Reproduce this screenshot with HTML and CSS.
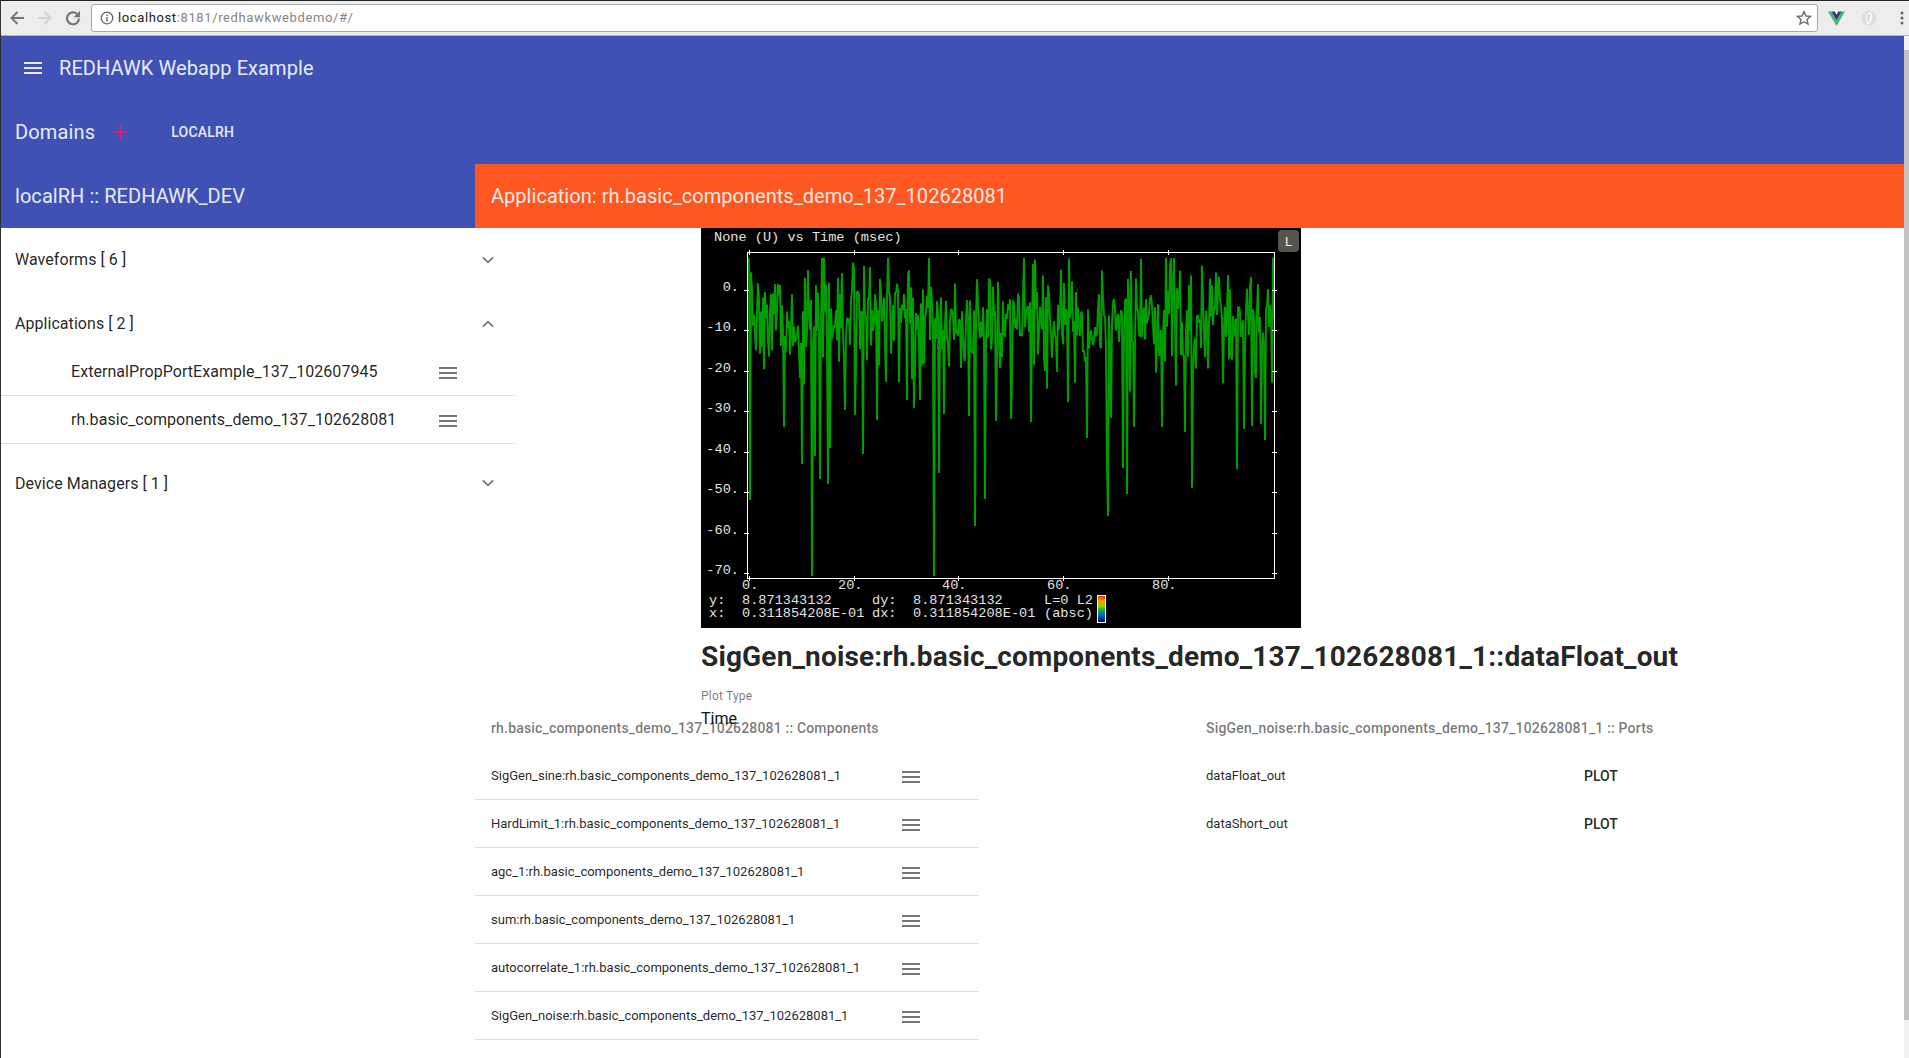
FILE: index.html
```html
<!DOCTYPE html>
<html lang="en">
<head>
<meta charset="utf-8">
<title>REDHAWK Webapp Example</title>
<link rel="stylesheet" href="styles.css">
</head>
<body>
<div class="window">
  <div class="chrome">
    <div class="nav">
      <svg class="nav-icon" viewBox="0 0 16 16"><path d="M15 8H2.500M8.500 2 2.500 8l6 6" fill="none" stroke="#777" stroke-width="2"/></svg>
      <svg class="nav-icon" viewBox="0 0 16 16"><path d="M1 8h12.500M7.500 2l6 6-6 6" fill="none" stroke="#d4d4d4" stroke-width="2"/></svg>
      <svg class="nav-icon" viewBox="0 0 16 16"><path d="M14 8.500a6 6 0 1 1-1.800-4.500" fill="none" stroke="#777" stroke-width="2.200"/><path d="M15 .8v6.400H8.600z" fill="#777"/></svg>
    </div>
    <div class="omnibox">
      <svg class="info" viewBox="0 0 14 14"><circle cx="7" cy="7" r="5.800" fill="none" stroke="#666" stroke-width="1.300"/><path d="M7 6v4.500M7 3.400v1.500" stroke="#666" stroke-width="1.400"/></svg>
      <span class="url"><span class="host">localhost</span>:8181/redhawkwebdemo/#/</span>
      <svg class="star" viewBox="0 0 16 16"><path d="M8 1.600 9.900 6l4.700.4-3.600 3.100 1.100 4.600L8 11.700l-4.100 2.400L5 9.500 1.400 6.400 6.100 6z" fill="none" stroke="#6e6e6e" stroke-width="1.400"/></svg>
    </div>
    <div class="extensions">
      <svg class="ext" viewBox="0 0 17 15"><path d="M0 .5h3.400L8.500 9.300 13.600.5H17L8.500 15z" fill="#41b883"/><path d="M3.400 .5h3.200l1.900 3.200L10.400.5h3.200L8.500 9.300z" fill="#2f3f6b"/></svg>
      <svg class="ext ext-grey" viewBox="0 0 16 16"><circle cx="8" cy="8" r="7.600" fill="#dcdcdc"/><path d="M9.500 1.500C5 3 3.500 9 6 14.500 11.500 13 13.500 6 9.500 1.500z" fill="#f5f5f5"/><path d="M8.500 4.500C7 7 7 10 8 12" fill="none" stroke="#d0d0d0" stroke-width="1.500"/></svg>
      <svg class="menu-dots" viewBox="0 0 4 16"><circle cx="2" cy="3" r="1.500" fill="#666"/><circle cx="2" cy="8" r="1.500" fill="#666"/><circle cx="2" cy="13" r="1.500" fill="#666"/></svg>
    </div>
  </div>

  <div class="viewport">
    <div class="page">
      <header class="app-header">
        <div class="toolbar">
          <svg class="burger-white" viewBox="0 0 18 12"><path d="M0 1h18M0 6h18M0 11h18" stroke="#e8eaf6" stroke-width="2"/></svg>
          <span class="app-title">REDHAWK Webapp Example</span>
        </div>
        <div class="domains">
          <span class="domains-label">Domains</span>
          <svg class="plus" viewBox="0 0 15 14"><path d="M7.500 0v14M0 7h15" stroke="#e91e63" stroke-width="1.600"/></svg>
          <span class="tab">LOCALRH</span>
        </div>
        <div class="subheader">
          <div class="domain-name">localRH :: REDHAWK_DEV</div>
          <div class="app-name">Application: rh.basic_components_demo_137_102628081</div>
        </div>
      </header>

      <div class="body-row">
        <aside class="sidebar">
          <div class="group-head group-tight">
            <span>Waveforms [ 6 ]</span>
            <svg class="chev" viewBox="0 0 12 8"><path d="M1 1.300 6 6.300l5-5" fill="none" stroke="#757575" stroke-width="1.800"/></svg>
          </div>
          <div class="group-head group-tight">
            <span>Applications [ 2 ]</span>
            <svg class="chev chev-up" viewBox="0 0 12 8"><path d="M1 6.700 6 1.700l5 5" fill="none" stroke="#757575" stroke-width="1.800"/></svg>
          </div>
          <div class="app-row">
            <span>ExternalPropPortExample_137_102607945</span>
            <svg class="burger" viewBox="0 0 18 12"><path d="M0 1h18M0 6h18M0 11h18" stroke="#757575" stroke-width="2"/></svg>
          </div>
          <div class="app-row">
            <span>rh.basic_components_demo_137_102628081</span>
            <svg class="burger" viewBox="0 0 18 12"><path d="M0 1h18M0 6h18M0 11h18" stroke="#757575" stroke-width="2"/></svg>
          </div>
          <div class="group-head group-devices">
            <span>Device Managers [ 1 ]</span>
            <svg class="chev" viewBox="0 0 12 8"><path d="M1 1.300 6 6.300l5-5" fill="none" stroke="#757575" stroke-width="1.800"/></svg>
          </div>
        </aside>

        <main class="main">
          <section class="plot-section">
            <div class="plot">
              <svg class="plot-svg" viewBox="0 0 600 400" width="600" height="400">
                <polyline id="trace" class="trace" points=""></polyline>
                <polyline id="trace-core" class="trace-core" points=""></polyline>
                <rect class="frame" x="46.500" y="24.500" width="527" height="326"></rect>
                <path id="ticks" class="frame" d=""></path>
                <text class="mono" x="13" y="13">None (U) vs Time (msec)</text>
                <text class="mono" x="38" y="63" text-anchor="end"> 0.</text>
                <text class="mono" x="38" y="103" text-anchor="end">-10.</text>
                <text class="mono" x="38" y="144" text-anchor="end">-20.</text>
                <text class="mono" x="38" y="184" text-anchor="end">-30.</text>
                <text class="mono" x="38" y="225" text-anchor="end">-40.</text>
                <text class="mono" x="38" y="265" text-anchor="end">-50.</text>
                <text class="mono" x="38" y="306" text-anchor="end">-60.</text>
                <text class="mono" x="38" y="346" text-anchor="end">-70.</text>
                <text class="mono" x="41" y="361">0.</text>
                <text class="mono" x="137" y="361">20.</text>
                <text class="mono" x="241" y="361">40.</text>
                <text class="mono" x="346" y="361">60.</text>
                <text class="mono" x="451" y="361">80.</text>
                <text class="mono" x="8" y="376">y:</text>
                <text class="mono" x="41" y="376">8.871343132</text>
                <text class="mono" x="171" y="376">dy:</text>
                <text class="mono" x="212" y="376">8.871343132</text>
                <text class="mono" x="343" y="376">L=0 L2</text>
                <text class="mono" x="8" y="389">x:</text>
                <text class="mono" x="41" y="389">0.311854208E-01</text>
                <text class="mono" x="171" y="389">dx:</text>
                <text class="mono" x="212" y="389">0.311854208E-01</text>
                <text class="mono" x="343" y="389">(absc)</text>
                <defs>
                  <linearGradient id="rainbow" x1="0" y1="0" x2="0" y2="1">
                    <stop offset="0" stop-color="#f02808"></stop>
                    <stop offset=".2" stop-color="#f0a000"></stop>
                    <stop offset=".4" stop-color="#90d000"></stop>
                    <stop offset=".55" stop-color="#00b050"></stop>
                    <stop offset=".75" stop-color="#0060d0"></stop>
                    <stop offset="1" stop-color="#000070"></stop>
                  </linearGradient>
                </defs>
                <rect x="396.500" y="367.500" width="8" height="27" fill="url(#rainbow)" stroke="#fff"></rect>
              </svg>
              <span class="legend-btn">L</span>
            </div>
            <h1 class="plot-title">SigGen_noise:rh.basic_components_demo_137_102628081_1::dataFloat_out</h1>
            <div class="field-label">Plot Type</div>
            <div class="field-value">Time</div>
          </section>

          <section class="lists">
            <div class="components">
              <h2 class="list-head">rh.basic_components_demo_137_102628081 :: Components</h2>
              <div class="comp-row"><span>SigGen_sine:rh.basic_components_demo_137_102628081_1</span><svg class="burger" viewBox="0 0 18 12"><path d="M0 1h18M0 6h18M0 11h18" stroke="#757575" stroke-width="2"/></svg></div>
              <div class="comp-row"><span>HardLimit_1:rh.basic_components_demo_137_102628081_1</span><svg class="burger" viewBox="0 0 18 12"><path d="M0 1h18M0 6h18M0 11h18" stroke="#757575" stroke-width="2"/></svg></div>
              <div class="comp-row"><span>agc_1:rh.basic_components_demo_137_102628081_1</span><svg class="burger" viewBox="0 0 18 12"><path d="M0 1h18M0 6h18M0 11h18" stroke="#757575" stroke-width="2"/></svg></div>
              <div class="comp-row"><span>sum:rh.basic_components_demo_137_102628081_1</span><svg class="burger" viewBox="0 0 18 12"><path d="M0 1h18M0 6h18M0 11h18" stroke="#757575" stroke-width="2"/></svg></div>
              <div class="comp-row"><span>autocorrelate_1:rh.basic_components_demo_137_102628081_1</span><svg class="burger" viewBox="0 0 18 12"><path d="M0 1h18M0 6h18M0 11h18" stroke="#757575" stroke-width="2"/></svg></div>
              <div class="comp-row"><span>SigGen_noise:rh.basic_components_demo_137_102628081_1</span><svg class="burger" viewBox="0 0 18 12"><path d="M0 1h18M0 6h18M0 11h18" stroke="#757575" stroke-width="2"/></svg></div>
            </div>
            <div class="ports">
              <h2 class="list-head">SigGen_noise:rh.basic_components_demo_137_102628081_1 :: Ports</h2>
              <div class="port-row"><span class="port-name">dataFloat_out</span><span class="port-action">PLOT</span></div>
              <div class="port-row"><span class="port-name">dataShort_out</span><span class="port-action">PLOT</span></div>
            </div>
          </section>
        </main>
      </div>
    </div>
    <div class="scrollbar"><div class="scroll-arrow"></div><div class="scroll-thumb"></div></div>
  </div>
</div>
<script src="plot.js"></script>
</body>
</html>
```

FILE: styles.css
```css
* { box-sizing: border-box; }
html, body { margin: 0; height: 100%; overflow: hidden; background: #fff; }
body { font-family: Roboto, "Liberation Sans", sans-serif; color: rgba(0,0,0,.87); }

.window { height: 1058px; display: flex; flex-direction: column; border-left: 1px solid #333; }

.chrome { height: 36px; flex: none; display: flex; align-items: center; background: #ededed; border-top: 1px solid #222; border-bottom: 1px solid #b5b5b5; }
.nav { width: 90px; flex: none; display: flex; gap: 12px; padding-left: 8px; }
.nav-icon { width: 16px; height: 16px; }
.omnibox { width: 1727px; height: 28px; flex: none; margin-top: -1px; display: flex; align-items: center; padding: 0 5px 0 8px; background: #fff; border: 1px solid #a9a9a9; border-radius: 3px; }
.info { width: 14px; height: 14px; flex: none; }
.url { margin-left: 4px; flex: 1; font-size: 13px; color: #858585; letter-spacing: .62px; }
.host { color: #222; }
.star { width: 16px; height: 16px; flex: none; }
.extensions { flex: 1; display: flex; align-items: center; padding-left: 10px; }
.ext { width: 17px; height: 15px; margin-right: 16px; }
.ext-grey { width: 16px; height: 16px; margin-right: 23px; }
.menu-dots { width: 4px; height: 16px; }

.viewport { flex: 1; min-height: 0; display: flex; }
.page { flex: 1; min-width: 0; }
.scrollbar { width: 5px; flex: none; background: #f1f1f1; }
.scroll-arrow { height: 14px; }
.scroll-thumb { height: 970px; background: #c1c1c1; }

.app-header { background: #3f51b5; color: #e8eaf6; }
.toolbar { height: 64px; display: flex; align-items: center; padding-left: 23px; }
.burger-white { width: 18px; height: 12px; flex: none; }
.app-title { margin-left: 17px; font-size: 20px; font-weight: 400; letter-spacing: .08px; }
.domains { height: 64px; display: flex; align-items: center; padding-left: 14px; }
.domains-label { font-size: 20px; letter-spacing: .15px; }
.plus { width: 15px; height: 14px; margin-left: 18px; }
.tab { margin-left: 43px; font-size: 14px; font-weight: 500; letter-spacing: .2px; }
.subheader { height: 64px; display: flex; }
.domain-name { width: 474px; flex: none; display: flex; align-items: center; padding-left: 14px; font-size: 20px; letter-spacing: .05px; }
.app-name { flex: 1; display: flex; align-items: center; padding-left: 16px; background: #ff5722; color: #ffe9e2; font-size: 20px; letter-spacing: .03px; }

.body-row { display: flex; }
.sidebar { width: 474px; flex: none; }
.sidebar > * { width: 515px; }
.group-head { height: 64px; display: flex; align-items: center; justify-content: space-between; padding: 0 22px 0 14px; font-size: 16px; letter-spacing: .05px; }
.group-tight > span { margin-top: -1px; }
.group-head:nth-child(2) { height: 56px; padding-top: 8px; }
.group-devices { margin-top: 7px; }
.chev { width: 12px; height: 8px; flex: none; }
.app-row { height: 48px; display: flex; align-items: center; justify-content: space-between; padding: 0 59px 0 70px; font-size: 16px; letter-spacing: .05px; border-bottom: 1px solid #e0e0e0; }
.burger { width: 18px; height: 12px; flex: none; margin-top: 2px; }

.main { flex: 1; min-width: 0; }
.plot-section { height: 476px; padding-left: 226px; }
.plot { position: relative; width: 600px; height: 400px; background: #000; }
.plot-svg { display: block; }
.trace { fill: none; stroke: #008c00; stroke-width: 2; stroke-linejoin: bevel; }
.trace-core { fill: none; stroke: #00b000; stroke-width: .6; stroke-linejoin: bevel; }
.frame { fill: none; stroke: #fff; stroke-width: 1; shape-rendering: crispEdges; }
.mono { font-family: "Liberation Mono", monospace; font-size: 13.600px; fill: #e4e4e4; white-space: pre; }
.legend-btn { position: absolute; right: 2px; top: 2px; width: 21px; height: 22px; display: flex; align-items: center; justify-content: center; background: #55554e; border-radius: 4px; color: #eee; font-size: 13px; }
.plot-title { margin: 12px 0 0; font-size: 28px; line-height: 34px; font-weight: 700; letter-spacing: .155px; color: rgba(0,0,0,.87); white-space: nowrap; }
.field-label { margin-top: 14px; font-size: 12px; line-height: 16px; letter-spacing: .2px; color: rgba(0,0,0,.54); }
.field-value { font-size: 16px; line-height: 20px; margin-top: 5px; position: relative; z-index: 1; color: #111; }

.lists { display: flex; }
.components { width: 504px; flex: none; }
.ports { flex: 1; padding-left: 227px; }
.list-head { margin: 0; height: 48px; display: flex; align-items: center; padding-left: 16px; font-size: 14px; font-weight: 500; letter-spacing: .17px; color: rgba(0,0,0,.54); }
.ports .list-head { padding-left: 0; letter-spacing: .19px; }
.comp-row { height: 48px; display: flex; align-items: center; justify-content: space-between; padding: 0 59px 0 16px; font-size: 13px; border-bottom: 1px solid #e0e0e0; }
.port-row { height: 48px; display: flex; align-items: center; font-size: 13px; }
.port-name { width: 378px; flex: none; margin-top: -2px; }
.port-action { font-size: 14px; font-weight: 500; }
```

FILE: plot.js
```js
// Deterministic noise trace for the demo plot (values in dB, x in msec).
(function () {
  var ZERO_Y = 62, PX_PER_DB = 4.04;
  var seed = 137;
  function rnd() {
    seed = (seed * 16807) % 2147483647;
    return seed / 2147483647;
  }
  function gauss() {
    return Math.sqrt(-2 * Math.log(rnd() + 1e-9)) * Math.cos(2 * Math.PI * rnd());
  }
  // Deep spikes at known samples: [plot x, plot y]
  var spikes = [[49,272],[83,199],[101,236],[111,348],[114,228],[119,251],[127,256],[129,220],[144,182],[154,187],[162,226],[176,192],[213,180],[233,348],[238,245],[243,186],[268,188],[274,298],[284,271],[295,193],[310,191],[330,194],[367,174],[386,210],[406,239],[407,288],[410,190],[422,240],[426,266],[433,199],[461,199],[484,204],[491,260],[536,241],[543,201],[551,198],[560,196],[564,212]];
  var map = {};
  spikes.forEach(function (s) { map[s[0]] = s[1]; });

  var pts = [];
  for (var x = 48; x <= 573; x += 1) {
    var db = -6 + gauss() * 6;
    var r = rnd();
    if (r < 0.25) db -= 3 + rnd() * 9;
    if (r > 0.93) db += 5 + rnd() * 5;
    var y = ZERO_Y - db * PX_PER_DB;
    y = Math.max(30, Math.min(y, 172));
    if (map[x]) y = map[x];
    pts.push(x + ',' + y.toFixed(1));
  }
  var points = pts.join(' ');
  document.getElementById('trace').setAttribute('points', points);
  document.getElementById('trace-core').setAttribute('points', points);

  var d = '';
  [48.5, 153.5, 257.5, 362.5, 467.5].forEach(function (x) { d += 'M' + x + ' 22v5M' + x + ' 348v5'; });
  [62.5, 102.5, 143.5, 183.5, 224.5, 264.5, 305.5, 345.5].forEach(function (y) { d += 'M43 ' + y + 'h5M571 ' + y + 'h5'; });
  document.getElementById('ticks').setAttribute('d', d);
})();
```
